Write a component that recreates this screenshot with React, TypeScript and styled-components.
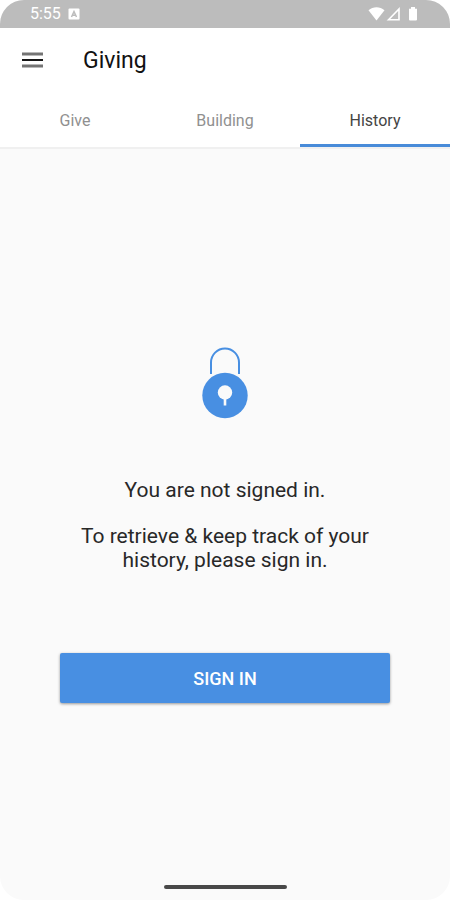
import React, { useState } from "react";
import styled, { createGlobalStyle } from "styled-components";

const GlobalStyle = createGlobalStyle`
  *, *::before, *::after { box-sizing: border-box; }
  body { margin: 0; background: #ffffff; font-family: Roboto, "Liberation Sans", sans-serif; }
  button { font: inherit; border: 0; cursor: pointer; }
`;

const Screen = styled.div`
  display: flex;
  flex-direction: column;
  min-height: 100vh;
  overflow: hidden;
  background: #fafafa;
  border-radius: 24px;
`;

const StatusBar = styled.div`
  display: flex;
  align-items: center;
  justify-content: space-between;
  height: 28px;
  padding: 0 30px;
  background: #bcbcbc;
  color: #ffffff;
  font-size: 16px;
  line-height: 28px;
`;

const StatusGroup = styled.div`
  display: flex;
  align-items: center;
  gap: 7px;
`;

const StatusIcons = styled.svg`
  display: block;
`;

const Header = styled.header`
  background: #ffffff;
  border-bottom: 2px solid #f0f0f0;
`;

const TitleBar = styled.div`
  display: flex;
  align-items: center;
  gap: 39px;
  height: 66px;
  padding: 0 21px;
`;

const MenuButton = styled.button`
  display: flex;
  padding: 0;
  background: transparent;
  margin-bottom: 3px;
`;

const Title = styled.h1`
  margin: 0;
  color: #111111;
  font-size: 23px;
  font-weight: 400;
  line-height: 28px;
`;

const Tabs = styled.div`
  display: grid;
  grid-template-columns: repeat(3, 1fr);
`;

const Tab = styled.button<{ $active: boolean }>`
  height: 53px;
  padding: 3px 0 0;
  background: transparent;
  color: ${(p) => (p.$active ? "#444444" : "#909090")};
  border-bottom: 3px solid ${(p) => (p.$active ? "#488bd9" : "transparent")};
  font-size: 16px;
  line-height: 20px;
`;

const Main = styled.main`
  display: flex;
  flex: 1;
  flex-direction: column;
  align-items: center;
  justify-content: center;
  padding: 28px 60px 0;
`;

const Message = styled.div`
  margin: 59px 0 81px;
  color: #282828;
  font-size: 21px;
  line-height: 24px;
  text-align: center;
`;

const Paragraph = styled.p`
  margin: 0;
  & + & { margin-top: 22px; }
`;

const SignInButton = styled.button`
  width: 100%;
  height: 50px;
  background: #488fe2;
  border-radius: 2px;
  box-shadow: 0 1px 3px rgba(0, 0, 0, 0.4);
  color: #ffffff;
  font-size: 18px;
  font-weight: 500;
  text-transform: uppercase;
`;

const NavigationBar = styled.div`
  display: flex;
  align-items: center;
  justify-content: center;
  height: 27px;
`;

const Handle = styled.div`
  width: 123px;
  height: 4px;
  border-radius: 2px;
  background: #484848;
`;

const tabs = ["Give", "Building", "History"];

function LockIcon() {
  return (
    <svg width="46" height="72" viewBox="0 0 46 72" aria-hidden="true">
      <path d="M9 27V15.500a14 14 0 0 1 28 0V27" fill="none" stroke="#488fe2" strokeWidth="2" />
      <circle cx="23" cy="48.5" r="22.7" fill="#488fe2" />
      <circle cx="23" cy="45.5" r="7.2" fill="#fafafa" />
      <path d="M23 50v8.500" stroke="#fafafa" strokeWidth="2.6" />
    </svg>
  );
}

export default function App() {
  const [active, setActive] = useState("History");
  return (
    <>
      <GlobalStyle />
      <Screen>
        <StatusBar>
          <StatusGroup>
            <span>5:55</span>
            <StatusIcons width="12" height="12" viewBox="0 0 12 12" aria-hidden="true">
              <rect x="0.5" y="0.5" width="11" height="11" rx="1" fill="#fff" />
              <path d="M3.5 9 6 3.5 8.5 9M4.5 7.2h3" fill="none" stroke="#bcbcbc" strokeWidth="1.5" />
            </StatusIcons>
          </StatusGroup>
          <StatusIcons width="52" height="16" viewBox="0 0 52 16" aria-hidden="true">
            <path d="M0.5 4.3C5 .3 12 .3 16.5 4.3L8.5 14.5Z" fill="#fff" />
            <path d="M20.5 13.7 31 3v10.7Z" fill="none" stroke="#fff" strokeWidth="1.6" />
            <path d="M43 1h4v1.7h2V13.5a1 1 0 0 1-1 1h-6a1 1 0 0 1-1-1V2.700h2Z" fill="#fff" />
          </StatusIcons>
        </StatusBar>
        <Header>
          <TitleBar>
            <MenuButton aria-label="Open menu">
              <svg width="23" height="16" viewBox="0 0 23 16" aria-hidden="true">
                <path d="M1 2h21M1 14h21" stroke="#747474" strokeWidth="3" />
                <path d="M1 8h21" stroke="#151515" strokeWidth="2" />
              </svg>
            </MenuButton>
            <Title>Giving</Title>
          </TitleBar>
          <Tabs role="tablist">
            {tabs.map((tab) => (
              <Tab
                key={tab}
                role="tab"
                aria-selected={tab === active}
                $active={tab === active}
                onClick={() => setActive(tab)}
              >
                {tab}
              </Tab>
            ))}
          </Tabs>
        </Header>
        <Main>
          <LockIcon />
          <Message>
            <Paragraph>You are not signed in.</Paragraph>
            <Paragraph>To retrieve &amp; keep track of your history, please sign in.</Paragraph>
          </Message>
          <SignInButton>Sign in</SignInButton>
        </Main>
        <NavigationBar>
          <Handle />
        </NavigationBar>
      </Screen>
    </>
  );
}
